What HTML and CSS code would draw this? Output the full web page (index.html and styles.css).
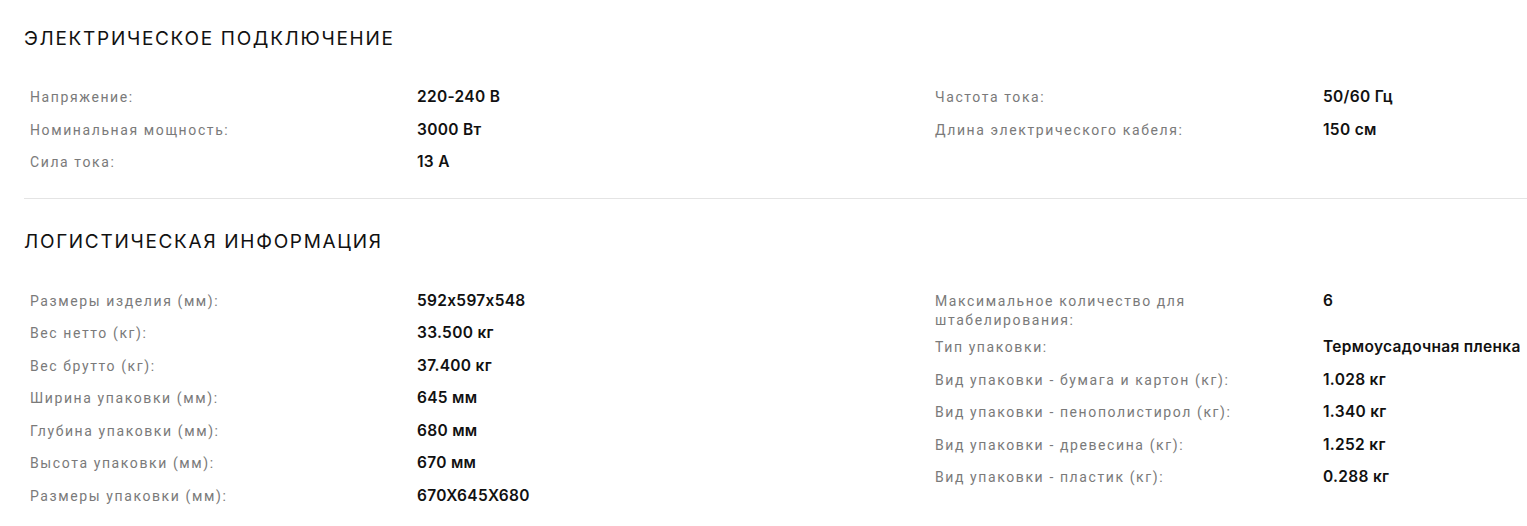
FILE: index.html
```html
<!DOCTYPE html>
<html lang="ru">
<head>
<meta charset="utf-8">
<title>Характеристики</title>
<link rel="stylesheet" href="styles.css">
</head>
<body>
<div class="specs">
  <section class="group">
    <h2 class="group-title">ЭЛЕКТРИЧЕСКОЕ ПОДКЛЮЧЕНИЕ</h2>
    <div class="cols">
      <div class="col col-left">
        <div class="row"><div class="label">Напряжение:</div><div class="value">220-240 В</div></div>
        <div class="row"><div class="label">Номинальная мощность:</div><div class="value">3000 Вт</div></div>
        <div class="row"><div class="label">Сила тока:</div><div class="value">13 A</div></div>
      </div>
      <div class="col col-right">
        <div class="row"><div class="label">Частота тока:</div><div class="value">50/60 Гц</div></div>
        <div class="row"><div class="label">Длина электрического кабеля:</div><div class="value">150 см</div></div>
      </div>
    </div>
  </section>
  <section class="group group-last">
    <h2 class="group-title">ЛОГИСТИЧЕСКАЯ ИНФОРМАЦИЯ</h2>
    <div class="cols">
      <div class="col col-left">
        <div class="row"><div class="label">Размеры изделия (мм):</div><div class="value">592x597x548</div></div>
        <div class="row"><div class="label">Вес нетто (кг):</div><div class="value">33.500 кг</div></div>
        <div class="row"><div class="label">Вес брутто (кг):</div><div class="value">37.400 кг</div></div>
        <div class="row"><div class="label">Ширина упаковки (мм):</div><div class="value">645 мм</div></div>
        <div class="row"><div class="label">Глубина упаковки (мм):</div><div class="value">680 мм</div></div>
        <div class="row"><div class="label">Высота упаковки (мм):</div><div class="value">670 мм</div></div>
        <div class="row"><div class="label">Размеры упаковки (мм):</div><div class="value">670X645X680</div></div>
      </div>
      <div class="col col-right">
        <div class="row"><div class="label">Максимальное количество для штабелирования:</div><div class="value">6</div></div>
        <div class="row"><div class="label">Тип упаковки:</div><div class="value">Термоусадочная пленка</div></div>
        <div class="row"><div class="label">Вид упаковки - бумага и картон (кг):</div><div class="value">1.028 кг</div></div>
        <div class="row"><div class="label">Вид упаковки - пенополистирол (кг):</div><div class="value">1.340 кг</div></div>
        <div class="row"><div class="label">Вид упаковки - древесина (кг):</div><div class="value">1.252 кг</div></div>
        <div class="row"><div class="label">Вид упаковки - пластик (кг):</div><div class="value">0.288 кг</div></div>
      </div>
    </div>
  </section>
</div>
</body>
</html>
```
FILE: styles.css
```css
* { box-sizing: border-box; }
html, body { margin: 0; padding: 0; background: #fff; }
body {
  font-family: "Inter", "Noto Sans", sans-serif;
  font-feature-settings: "calt" 0;
  color: #111;
  overflow: hidden;
}
.specs {
  margin-left: 24px;
  padding-top: 27px;
}
.group {
  border-bottom: 1px solid #e4e4e4;
  padding-bottom: 19px;
  margin-bottom: 31px;
}
.group-last { border-bottom: none; }
.group-title {
  margin: 0;
  font-family: "Inter", "Noto Sans", sans-serif;
  font-weight: 400;
  font-size: 19px;
  line-height: 24px;
  letter-spacing: 1.7px;
  color: #111;
}
.cols {
  display: grid;
  grid-template-columns: 905px 1fr;
  margin-top: 30px;
}
.group-last .cols { margin-top: 31px; }
.col { padding-left: 6px; }
.row {
  display: flex;
  align-items: baseline;
  padding: 4.25px 0;
}
.label {
  flex: 0 0 387px;
  padding-right: 20px;
  margin-bottom: -3px;
  font-family: "Roboto", "Noto Sans", sans-serif;
  font-size: 14px;
  line-height: 19px;
  letter-spacing: 1.6px;
  color: #7a7a7a;
}
.col-right .label { flex-basis: 388px; }
.value {
  font-size: 15.5px;
  line-height: 24px;
  font-weight: 600;
  letter-spacing: 0.3px;
  color: #111;
  white-space: nowrap;
}
```
